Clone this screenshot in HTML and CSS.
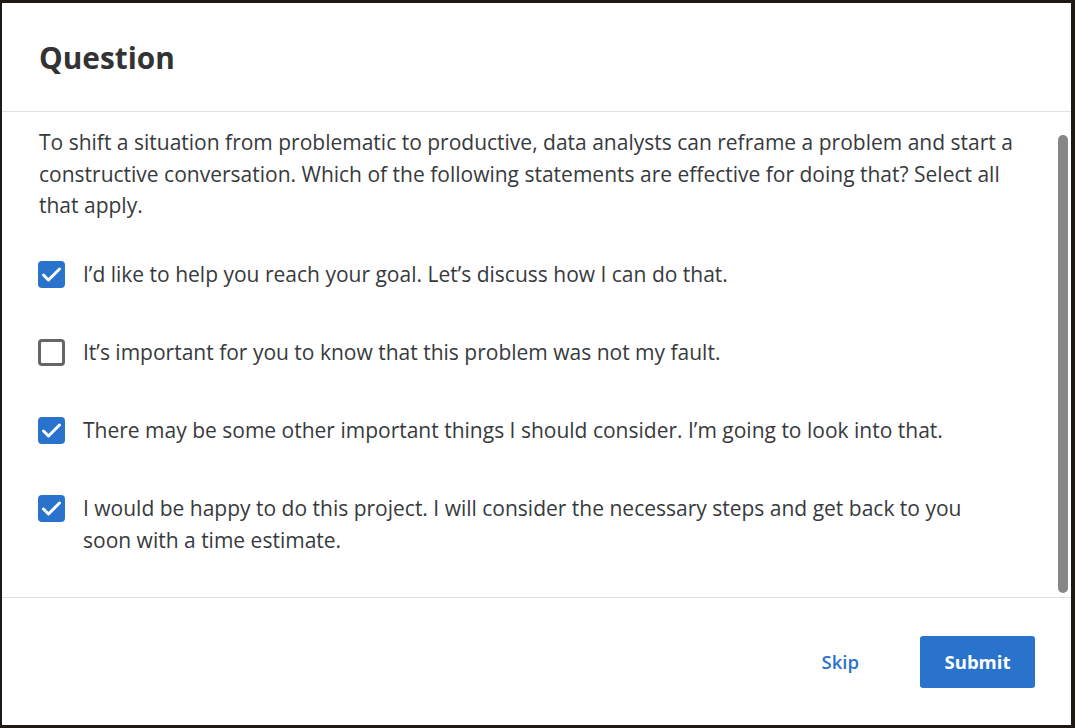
FILE: index.html
```html
<!DOCTYPE html>
<html lang="en">
<head>
<meta charset="utf-8">
<title>Question</title>
<link rel="stylesheet" href="styles.css">
</head>
<body>
<div class="dialog">
  <header class="dialog-header">
    <h1 class="dialog-title">Question</h1>
  </header>
  <div class="dialog-body">
    <div class="scroll-content">
      <p class="prompt">To shift a situation from problematic to productive, data analysts can reframe a problem and start a constructive conversation. Which of the following statements are effective for doing that? Select all that apply.</p>
      <ul class="options">
        <li class="option">
          <span class="box checked"><svg viewBox="0 0 21 21" width="21" height="21"><path d="M2.5 11l5 5L18.5 5" fill="none" stroke="#fff" stroke-width="3" stroke-linecap="round" stroke-linejoin="round"/></svg></span>
          <span class="label">I’d like to help you reach your goal. Let’s discuss how I can do that.</span>
        </li>
        <li class="option">
          <span class="box"></span>
          <span class="label">It’s important for you to know that this problem was not my fault.</span>
        </li>
        <li class="option">
          <span class="box checked"><svg viewBox="0 0 21 21" width="21" height="21"><path d="M2.5 11l5 5L18.5 5" fill="none" stroke="#fff" stroke-width="3" stroke-linecap="round" stroke-linejoin="round"/></svg></span>
          <span class="label">There may be some other important things I should consider. I’m going to look into that.</span>
        </li>
        <li class="option">
          <span class="box checked"><svg viewBox="0 0 21 21" width="21" height="21"><path d="M2.5 11l5 5L18.5 5" fill="none" stroke="#fff" stroke-width="3" stroke-linecap="round" stroke-linejoin="round"/></svg></span>
          <span class="label">I would be happy to do this project. I will consider the necessary steps and get back to you soon with a time estimate.</span>
        </li>
      </ul>
    </div>
    <div class="scroll-thumb"></div>
  </div>
  <footer class="dialog-footer">
    <button class="btn-link">Skip</button>
    <button class="btn-primary">Submit</button>
  </footer>
</div>
</body>
</html>
```

FILE: styles.css
```css
* { box-sizing: border-box; }

html, body {
  margin: 0;
  padding: 0;
  height: 100%;
}

body {
  background: #1e1915;
  font-family: "Open Sans", "Noto Sans", sans-serif;
  color: #373a3c;
  padding: 3px 4px 3px 2px;
}

.dialog {
  background: #fff;
  width: 1069px;
  height: 722px;
  display: flex;
  flex-direction: column;
}

.dialog-header {
  height: 109px;
  border-bottom: 1px solid #e1e1e1;
  padding: 0 37px;
  display: flex;
  align-items: center;
}

.dialog-title {
  margin: 0;
  font-size: 29.8px;
  font-weight: 700;
  color: #333;
}

.dialog-body {
  position: relative;
  height: 486px;
  border-bottom: 1px solid #e1e1e1;
  overflow: hidden;
}

.scroll-content {
  padding: 15px 50px 0 36px;
}

.prompt {
  margin: 0 0 36px 1px;
  font-size: 21px;
  line-height: 31.5px;
}

.options {
  list-style: none;
  margin: 0;
  padding: 0;
  display: flex;
  flex-direction: column;
  gap: 46px;
}

.option {
  display: flex;
  align-items: flex-start;
  gap: 18px;
  font-size: 21px;
  line-height: 32px;
}

.box {
  flex: 0 0 auto;
  width: 27px;
  height: 27px;
  margin-top: 3px;
  border: 3px solid #666;
  border-radius: 4px;
  display: flex;
  align-items: center;
  justify-content: center;
}

.box.checked {
  background: #2a73cc;
  border-color: #2a73cc;
}

.label {
  max-width: 900px;
}

.scroll-thumb {
  position: absolute;
  right: 3px;
  top: 23px;
  bottom: 4px;
  width: 10px;
  background: #878787;
  border-radius: 5px;
}

.dialog-footer {
  flex: 1;
  display: flex;
  justify-content: flex-end;
  align-items: center;
  padding: 0 36px;
  gap: 37px;
}

.btn-link {
  background: none;
  border: none;
  font-family: inherit;
  font-size: 18.5px;
  font-weight: 600;
  color: #2a73cc;
  padding: 0 24px;
  cursor: pointer;
}

.btn-primary {
  width: 115px;
  height: 52px;
  background: #2a73cc;
  border: none;
  border-radius: 3px;
  color: #fff;
  font-family: inherit;
  font-size: 18.5px;
  font-weight: 700;
  cursor: pointer;
}
```
